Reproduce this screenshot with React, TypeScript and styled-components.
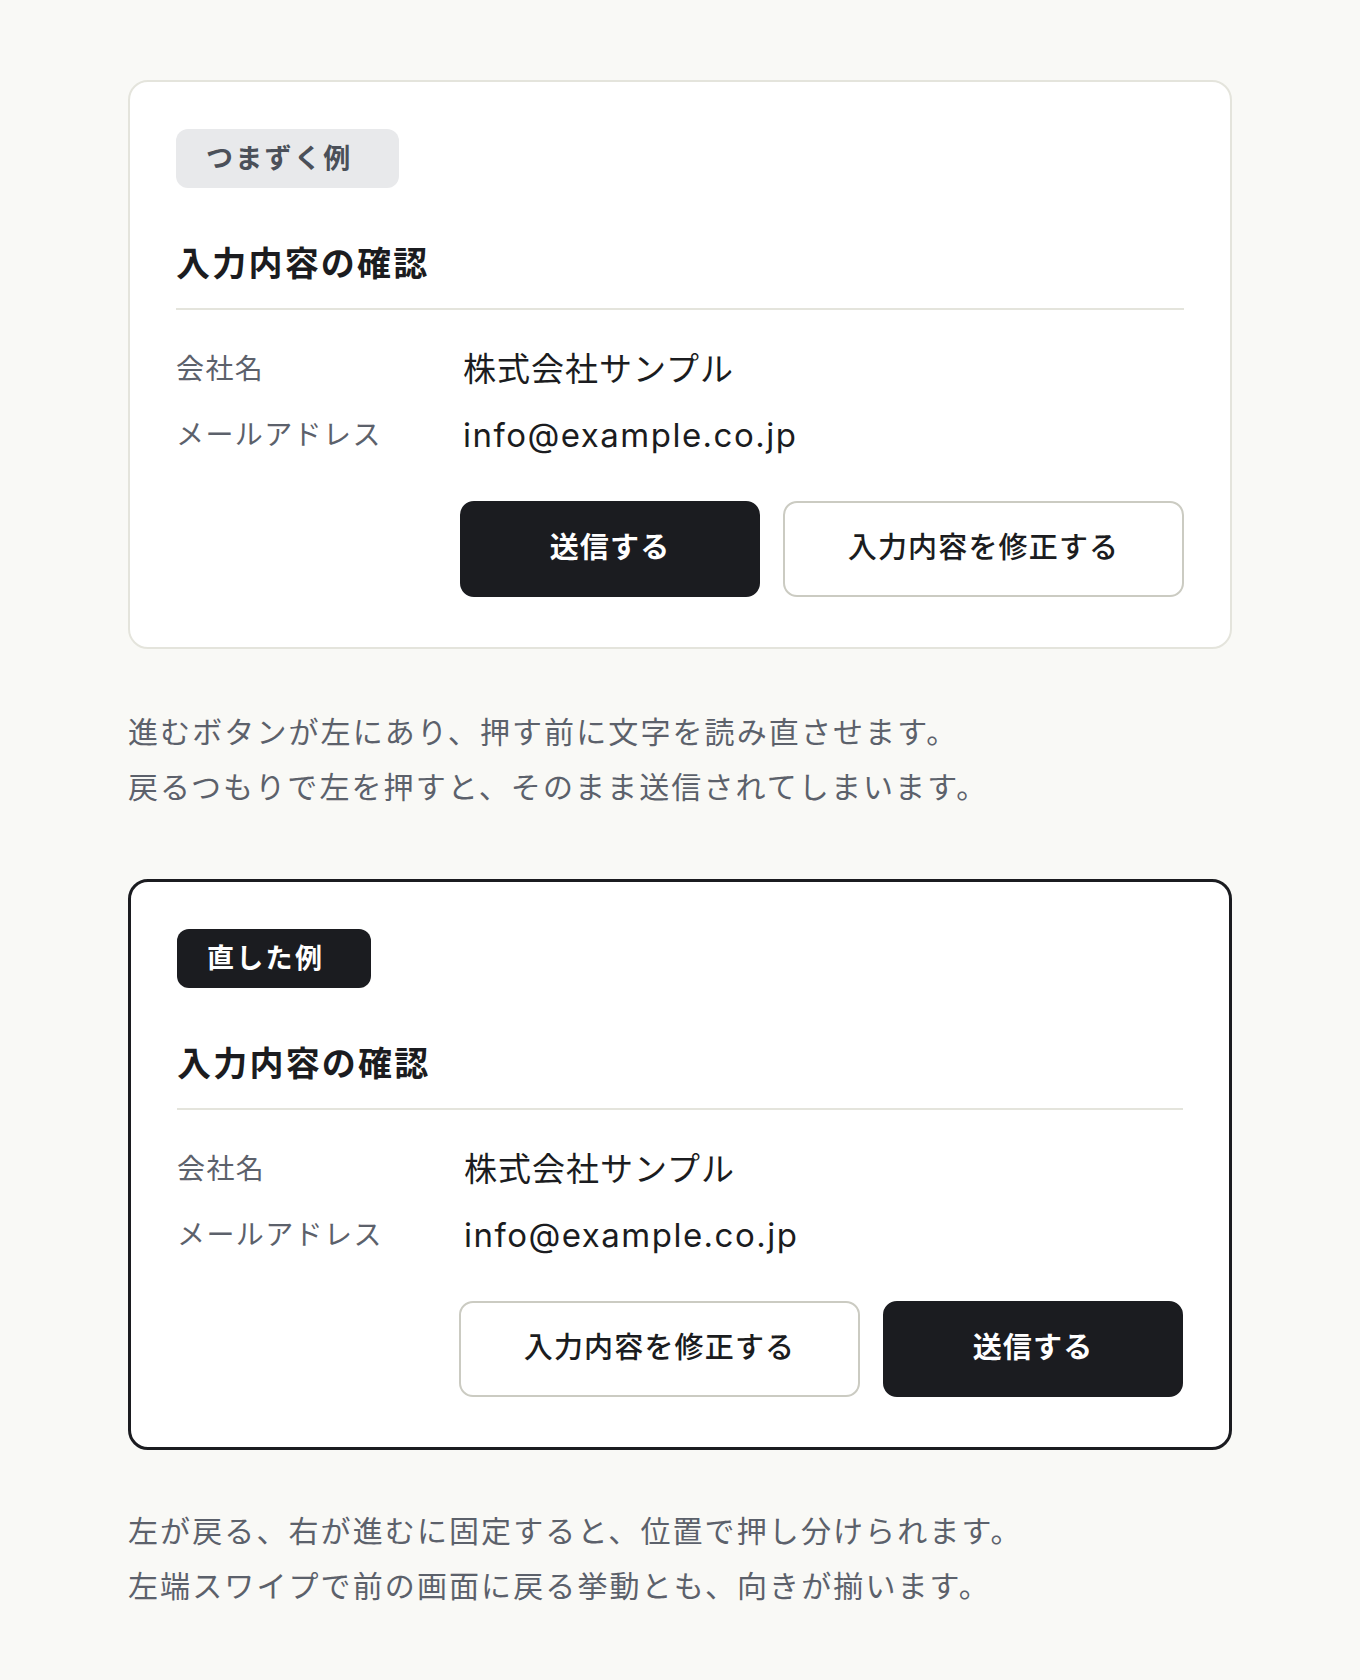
import React from "react";
import styled, { createGlobalStyle, css } from "styled-components";

const ink = "#1b1c20";
const line = "#e4e4dc";
const muted = "#5c616b";

const GlobalStyle = createGlobalStyle`
  html, body {
    margin: 0;
    padding: 0;
    background: #f9f9f6;
  }
  body {
    font-family: "Inter", "Noto Sans CJK JP", "Noto Sans", sans-serif;
    color: ${ink};
    -webkit-font-smoothing: antialiased;
  }
  * { box-sizing: border-box; }
`;

const Page = styled.main`
  width: 1104px;
  margin: 0 auto;
  padding: 80px 0 66px;
  display: flex;
  flex-direction: column;
`;

type Tone = "bad" | "good";

const Card = styled.section<{ $tone: Tone }>`
  background: #ffffff;
  border-radius: 20px;
  padding: 47px 46px 50px;
  display: flex;
  flex-direction: column;
  align-items: flex-start;
  ${(p) =>
    p.$tone === "good"
      ? css`
          border: 3px solid ${ink};
          margin-top: 64px;
        `
      : css`
          border: 2px solid ${line};
        `}
`;

const Badge = styled.span<{ $tone: Tone }>`
  display: inline-block;
  padding: 14px 47px 14px 30px;
  border-radius: 12px;
  font-size: 27px;
  line-height: 31px;
  font-weight: 700;
  letter-spacing: 0.085em;
  ${(p) =>
    p.$tone === "good"
      ? css`
          background: ${ink};
          color: #ffffff;
        `
      : css`
          background: #e8e9eb;
          color: #4b5059;
        `}
`;

const Title = styled.h2`
  align-self: stretch;
  margin: 52px 0 0;
  padding-bottom: 20px;
  border-bottom: 2px solid ${line};
  font-size: 34px;
  line-height: 48px;
  font-weight: 700;
  letter-spacing: 0.065em;
  color: ${ink};
`;

const Fields = styled.dl`
  align-self: stretch;
  margin: 33px 0 0;
  display: grid;
  grid-template-columns: 287px 1fr;
  row-gap: 14px;
`;

const Label = styled.dt`
  margin: 0;
  font-size: 28px;
  line-height: 52px;
  letter-spacing: 0.05em;
  color: ${muted};
`;

const Value = styled.dd<{ $latin?: boolean }>`
  margin: 0;
  font-size: 33px;
  line-height: 52px;
  letter-spacing: ${(p) => (p.$latin ? "0.045em" : "0.03em")};
  color: ${ink};
`;

const Actions = styled.div`
  align-self: stretch;
  margin-top: 40px;
  display: flex;
  justify-content: flex-end;
  gap: 23px;
`;

type Kind = "primary" | "secondary";

const Button = styled.button<{ $kind: Kind }>`
  height: 96px;
  padding: 0 0 4px;
  display: flex;
  align-items: center;
  justify-content: center;
  border-radius: 14px;
  font-family: inherit;
  font-size: 29px;
  line-height: 1;
  letter-spacing: 0.04em;
  cursor: pointer;
  ${(p) =>
    p.$kind === "primary"
      ? css`
          width: 300px;
          background: ${ink};
          border: 2px solid ${ink};
          color: #ffffff;
          font-weight: 700;
        `
      : css`
          width: 401px;
          background: #ffffff;
          border: 2px solid #cbcbc2;
          color: ${ink};
          font-weight: 500;
        `}
`;

const Note = styled.p<{ $gap: number }>`
  margin: ${(p) => p.$gap}px 0 0;
  font-size: 30px;
  line-height: 55px;
  letter-spacing: 0.07em;
  color: ${muted};
`;

type Example = {
  tone: Tone;
  badge: string;
  order: Kind[];
  noteGap: number;
  note: [string, string];
};

const examples: Example[] = [
  {
    tone: "bad",
    badge: "つまずく例",
    order: ["primary", "secondary"],
    noteGap: 56,
    note: [
      "進むボタンが左にあり、押す前に文字を読み直させます。",
      "戻るつもりで左を押すと、そのまま送信されてしまいます。",
    ],
  },
  {
    tone: "good",
    badge: "直した例",
    order: ["secondary", "primary"],
    noteGap: 54,
    note: [
      "左が戻る、右が進むに固定すると、位置で押し分けられます。",
      "左端スワイプで前の画面に戻る挙動とも、向きが揃います。",
    ],
  },
];

const buttonText: Record<Kind, string> = {
  primary: "送信する",
  secondary: "入力内容を修正する",
};

function ConfirmCard({ ex }: { ex: Example }) {
  return (
    <Card $tone={ex.tone}>
      <Badge $tone={ex.tone}>{ex.badge}</Badge>
      <Title>入力内容の確認</Title>
      <Fields>
        <Label>会社名</Label>
        <Value>株式会社サンプル</Value>
        <Label>メールアドレス</Label>
        <Value $latin>info@example.co.jp</Value>
      </Fields>
      <Actions>
        {ex.order.map((k) => (
          <Button key={k} $kind={k} type="button">
            {buttonText[k]}
          </Button>
        ))}
      </Actions>
    </Card>
  );
}

export default function App() {
  return (
    <>
      <GlobalStyle />
      <Page>
        {examples.map((ex) => (
          <React.Fragment key={ex.tone}>
            <ConfirmCard ex={ex} />
            <Note $gap={ex.noteGap}>
              {ex.note[0]}
              <br />
              {ex.note[1]}
            </Note>
          </React.Fragment>
        ))}
      </Page>
    </>
  );
}
